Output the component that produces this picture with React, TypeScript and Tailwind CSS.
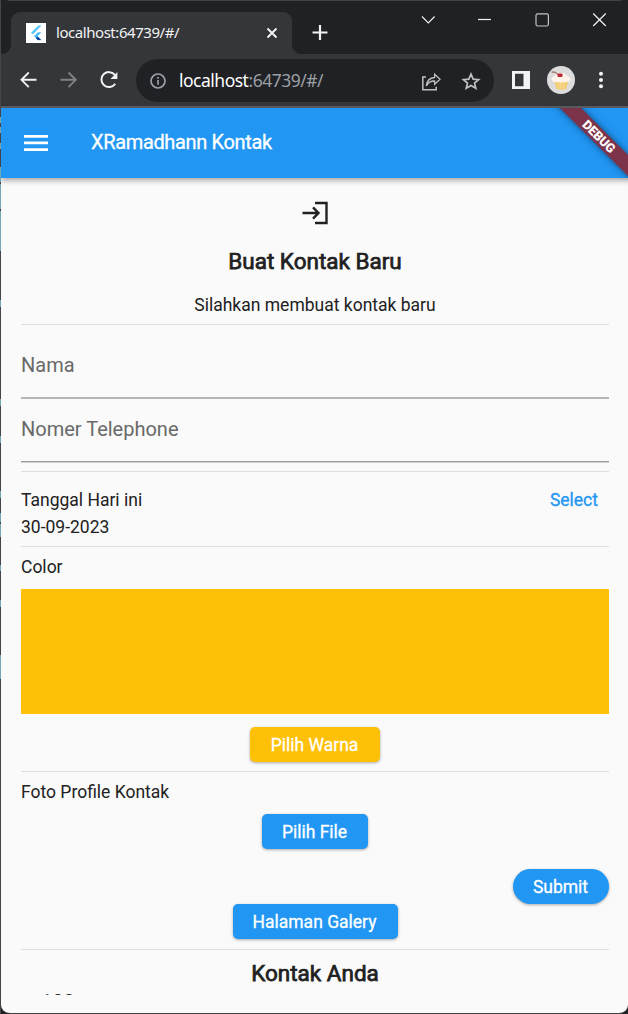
import type { ReactNode } from 'react';

const Divider = () => <div className="h-px w-full shrink-0 bg-[#dfdfdf]" />;

const edge: [number, number, string][] = [
  [0, 117, '#45454a'], [117, 6, '#70a7b3'], [123, 4, '#454449'], [127, 6, '#70a7b3'], [133, 10, '#454449'],
  [143, 6, '#70a7b3'], [149, 18, '#454449'], [167, 15, '#70a7b3'], [182, 2, '#454449'], [184, 25, '#70a7b3'],
  [209, 2, '#454449'], [211, 40, '#70a7b3'], [251, 49, '#454449'], [300, 7, '#70a7b3'], [307, 92, '#454449'],
  [399, 7, '#70a7b3'], [406, 30, '#454449'], [436, 7, '#70a7b3'], [443, 48, '#454449'], [491, 7, '#70a7b3'],
  [498, 15, '#454449'], [513, 9, '#70a7b3'], [522, 2, '#454449'], [524, 13, '#70a7b3'], [537, 28, '#454449'],
  [565, 6, '#70a7b3'], [571, 29, '#454449'], [600, 7, '#70a7b3'], [607, 48, '#454449'], [655, 24, '#70a7b3'],
  [679, 335, '#454449'],
];

function Raised({ children, className }: { children: ReactNode; className: string }) {
  return (
    <button
      className={`flex h-[35px] shrink-0 items-center justify-center pr-px pt-px text-[17.5px] text-white [-webkit-text-stroke:0.3px_white] shadow-[0_1px_3px_rgba(0,0,0,0.32)] ${className}`}
    >
      {children}
    </button>
  );
}

function TabStrip() {
  return (
    <div className="flex h-[54px] shrink-0 border-t border-[#414344] bg-[#202124]">
      <div className="flex w-[10px] items-end bg-[#35363a]">
        <div className="h-full w-full rounded-br-[9px] bg-[#202124]" />
      </div>
      <div className="mt-[11px] flex w-[281px] items-center rounded-t-[9px] bg-[#35363a] pb-px pl-[15px] pr-[13px]">
        <svg width="20" height="20" viewBox="0 0 20 20" className="shrink-0">
          <rect width="20" height="20" fill="#fff" />
          <path d="M12.500 2.500h3L7 11.300 5 9.800z" fill="#54c5f8" />
          <path d="M12 9.300h3.300l-3.800 3.900 3.700 4h-3.200l-4-4z" fill="#45bdf5" />
          <path d="M10 15.300l1.800-1.900 3.400 3.700h-3.500z" fill="#0b3b98" />
        </svg>
        <span className="ml-[10px] grow font-['Noto_Sans',sans-serif] text-[15px] tracking-[-0.450px] text-[#f1f3f4]">
          localhost:64739/#/
        </span>
        <svg width="14" height="14" viewBox="0 0 14 14" stroke="#f1f3f4" strokeWidth="1.9">
          <path d="M2.5 2.5l9 9M11.5 2.5l-9 9" />
        </svg>
      </div>
      <div className="w-[10px] bg-[#35363a]">
        <div className="h-full w-full rounded-bl-[9px] bg-[#202124]" />
      </div>
      <svg width="326" height="53" viewBox="302 1 326 53" fill="none" stroke="#f1f3f4" className="shrink-0">
        <path d="M312.5 32.5h15M320 25v15" strokeWidth="2.2" />
        <path d="M422 16.5l6.3 6.5 6.3-6.5" strokeWidth="1.1" />
        <path d="M478 19.5h13" strokeWidth="1.2" />
        <rect x="536" y="13.8" width="12.4" height="12.2" rx="1.8" stroke="#c4c5c6" strokeWidth="1.2" />
        <path d="M593.2 13.5l12.6 12.5M605.8 13.5l-12.6 12.5" strokeWidth="1.2" />
      </svg>
    </div>
  );
}

function Toolbar() {
  return (
    <div className="flex h-[54px] shrink-0 items-start border-b-2 border-[#5f6063] bg-[#35363a] pt-[5px]">
      <svg width="135" height="42" viewBox="1 59 135 42" fill="none" strokeWidth="1.9" className="shrink-0">
        <path d="M36.5 79.8H21.8M28.8 72.5l-7.3 7.3 7.3 7.3" stroke="#f1f3f4" />
        <path d="M60.5 79.8h15M68.5 72.5l7.3 7.3-7.3 7.3" stroke="#818286" />
        <path d="M115 75.200a7.500 7.500 0 1 0 .2 8.500" stroke="#f1f3f4" strokeWidth="2" />
        <path d="M117.4 72v7h-7z" fill="#f1f3f4" />
      </svg>
      <div className="flex h-[43px] w-[358px] items-center rounded-full bg-[#202124] pl-[13px] pr-3">
        <svg width="18" height="18" viewBox="0 0 18 18" fill="none" stroke="#9aa0a6" strokeWidth="1.7">
          <circle cx="9" cy="9" r="7" />
          <path d="M9 8v4.7M9 5v1.8" />
        </svg>
        <span className="ml-[12px] grow font-['Noto_Sans',sans-serif] text-[17.5px] leading-none text-[#9aa0a6]">
          <span className="tracking-[-0.5px] text-white">localhost</span>
          <span className="tracking-[-0.5px]">:64739/#/</span>
        </span>
        <svg width="62" height="24" viewBox="420 68 62 24" fill="none" stroke="#bfc1c4" strokeWidth="1.5">
          <path d="M426 76h-3.2v12.8h13.4v-3" />
          <path d="M426.3 84.8c.6-5.3 3.4-8 8.3-8.3v-3.3l5.4 5-5.4 5v-3.2c-3.8-.1-6.2 1.2-8.3 4.8z" strokeWidth="1.3" />
          <path d="M471 73.2l2.2 4.9 5.4.5-4.1 3.5 1.3 5.2-4.8-2.8-4.8 2.8 1.3-5.2-4.1-3.5 5.4-.5z" strokeWidth="1.7" />
        </svg>
      </div>
      <svg width="134" height="42" viewBox="494 59 134 42" className="shrink-0">
        <path d="M512 71h18v18h-18zm3 2.8v12.4h8.5V73.800z" fill="#f1f3f4" fillRule="evenodd" />
        <circle cx="561" cy="80" r="14" fill="#dcdcdc" />
        <path d="M554 80.500h14.500l-2.300 8.500q-4.700 1.500-9.700 0z" fill="#f3cc72" />
        <path d="M558 83l.6 5.500M561 83v5.500M564.200 83l-.6 5.500" stroke="#fbe3a3" strokeWidth=".8" />
        <path d="M551.500 79.800q-.3-2.800 3.500-4 1.500-3 6-2.800 4.500-.2 5.700 2.800 4 .8 3.600 4-1 2.500-3.500 2-2 1.500-4 .2-2 1.500-4.500 0-5 1.300-6.800-2.200z" fill="#fff4ea" />
        <path d="M551.500 72q4-1 6.500 2.500" stroke="#7a3d32" strokeWidth=".9" fill="none" />
        <rect x="557.500" y="73.500" width="5" height="3.500" rx="1" fill="#bd2836" />
        <g fill="#f1f3f4">
          <circle cx="601" cy="73.700" r="2" />
          <circle cx="601" cy="80" r="2" />
          <circle cx="601" cy="86.300" r="2" />
        </g>
      </svg>
    </div>
  );
}

function AppBar() {
  return (
    <header className="relative z-10 flex h-[70px] shrink-0 items-center bg-[#2196f3] pl-[23px] shadow-[0_2px_6px_rgba(0,0,0,0.38)]">
      <svg width="24" height="16" viewBox="0 0 24 16" fill="#fff" className="shrink-0">
        <path d="M0 0h24v2.700H0zM0 6.600h24v2.700H0zM0 13.200h24v2.700H0z" />
      </svg>
      <h1 className="ml-[43px] pb-[2px] text-[20px] tracking-[-0.350px] text-white [-webkit-text-stroke:0.3px_white]">
        XRamadhann Kontak
      </h1>
      <div className="absolute right-0 top-0 h-[78px] w-[78px] overflow-hidden">
        <div className="absolute left-[-16px] top-[21px] flex h-[15px] w-[130px] rotate-45 items-center justify-center bg-[#7d3349] text-[12.750px] font-black tracking-[-0.1px] text-white shadow-[0_0_7px_rgba(0,0,0,0.5)]">
          DEBUG
        </div>
      </div>
    </header>
  );
}

function Field({ label, className }: { label: string; className: string }) {
  return (
    <div className={`flex shrink-0 items-center text-[20px] text-[#696969] ${className}`}>
      {label}
    </div>
  );
}

export default function App() {
  return (
    <div className="flex h-[1014px] w-[628px] overflow-hidden bg-[#202124] font-[Roboto,sans-serif]">
      <div className="flex w-px shrink-0 flex-col">
        {edge.map(([y, h, c]) => (
          <div key={y} className="w-px shrink-0" style={{ height: h, backgroundColor: c }} />
        ))}
      </div>
      <div className="flex w-[627px] flex-col overflow-hidden rounded-[9px] border-b border-[#414144]">
        <TabStrip />
        <Toolbar />
        <div className="flex min-h-0 grow flex-col bg-[#fafafa]">
          <AppBar />
          <main className="flex h-[817px] shrink-0 flex-col overflow-hidden pl-5 pr-[19px] text-[17.5px] text-[#212121]">
            <div className="flex h-[70px] shrink-0 items-center justify-center">
              <svg width="26" height="24" viewBox="0 0 26 24" fill="none" stroke="#212121" strokeWidth="2.400">
                <path d="M.5 12h16M11 6.300l5.500 5.700-5.500 5.700M13 2h11.500v20H13" />
              </svg>
            </div>
            <h2 className="flex h-[28px] shrink-0 items-center justify-center text-[22.5px] font-normal [-webkit-text-stroke:0.75px_#212121]">
              Buat Kontak Baru
            </h2>
            <p className="mt-4 flex h-[26px] shrink-0 items-center justify-center">
              Silahkan membuat kontak baru
            </p>
            <div className="h-[6px] shrink-0" />
            <Divider />
            <Field label="Nama" className="h-[74px] border-b-2 border-[#b5b5b5] pt-2" />
            <Field label="Nomer Telephone" className="h-[63px] border-b border-[#9b9b9b] pb-[2px]" />
            <div className="h-[9px] shrink-0 border-t border-[#d2d2d2]" />
            <Divider />
            <div className="flex h-[74px] shrink-0 justify-between pt-[15px]">
              <div className="leading-[27px]">
                <p>Tanggal Hari ini</p>
                <p>30-09-2023</p>
              </div>
              <button className="mr-[11px] h-[27px] text-[#2196f3] [-webkit-text-stroke:0.3px_#2196f3]">Select</button>
            </div>
            <Divider />
            <p className="flex h-[42px] shrink-0 items-center pb-[2px]">Color</p>
            <div className="h-[125px] shrink-0 bg-[#ffc107]" />
            <Raised className="mt-[13px] w-[130px] self-center rounded-[5px] bg-[#ffc107]">Pilih Warna</Raised>
            <div className="h-[9px] shrink-0" />
            <Divider />
            <p className="flex h-[42px] shrink-0 items-center pb-[2px]">Foto Profile Kontak</p>
            <Raised className="w-[106px] self-center rounded-[5px] bg-[#2196f3]">Pilih File</Raised>
            <Raised className="mt-5 w-[96px] self-end rounded-full bg-[#2196f3]">Submit</Raised>
            <Raised className="w-[165px] self-center rounded-[5px] bg-[#2196f3]">Halaman Galery</Raised>
            <div className="h-[10px] shrink-0" />
            <Divider />
            <h2 className="flex h-[44px] shrink-0 items-center justify-center pt-1 text-[22.5px] font-normal [-webkit-text-stroke:0.75px_#212121]">
              Kontak Anda
            </h2>
            <p className="-mt-1 pl-5 text-[20px] leading-6">123</p>
          </main>
        </div>
      </div>
    </div>
  );
}
